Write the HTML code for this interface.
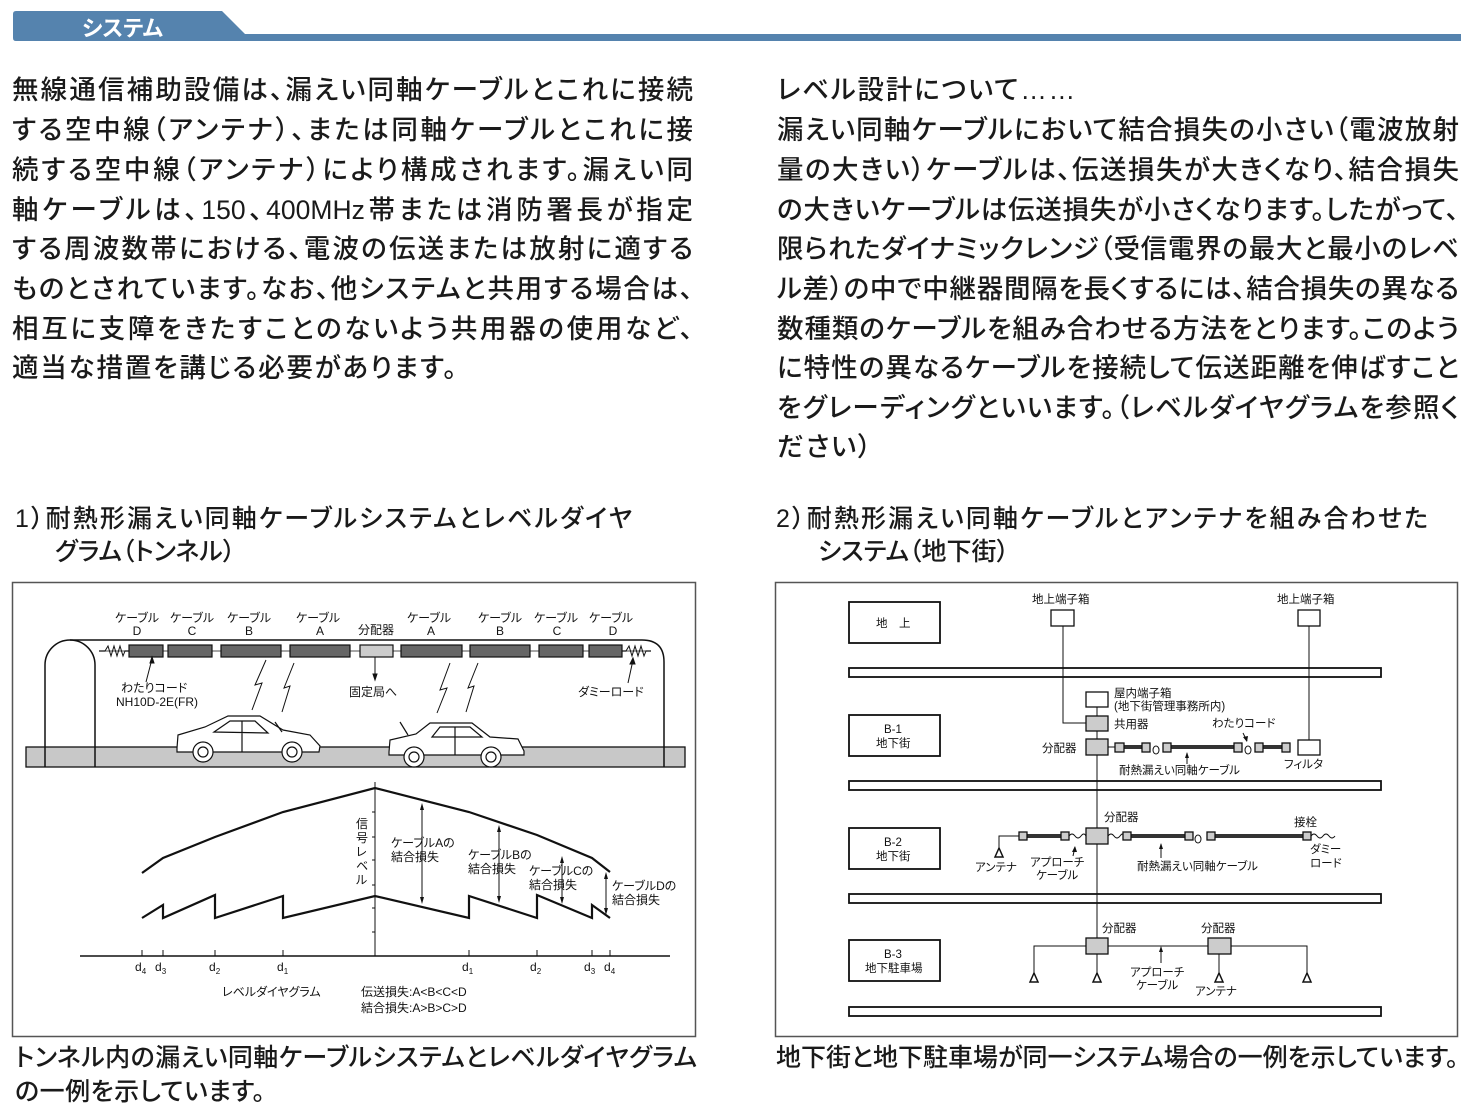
<!DOCTYPE html>
<html><head><meta charset="utf-8">
<style>
body{margin:0;width:1482px;height:1118px;background:#fff;position:relative;overflow:hidden;font-family:"Liberation Sans","Noto Sans CJK JP",sans-serif;color:#1a1a1a;font-feature-settings:"palt"}
.l{position:absolute;font-size:26.5px;font-weight:500;white-space:nowrap;line-height:30px;text-align:justify;text-align-last:justify}
.n{text-align-last:left;letter-spacing:1.8px}
.L{left:12px;width:681px}
.R{left:777px;width:682px}
.h{position:absolute;font-size:25px;font-weight:500;white-space:nowrap;line-height:30px;text-align:justify;text-align-last:justify}
svg{position:absolute;left:0;top:0}
svg text{font-family:"Liberation Sans","Noto Sans CJK JP",sans-serif;fill:#111}
</style></head><body>
<svg width="1482" height="1118" viewBox="0 0 1482 1118">
<path d="M13 14 Q13 11 16 11 L222 11 L245 34 L1461 34 L1461 41 L16 41 Q13 41 13 38 Z" fill="#5583ae"/>
<text x="82" y="36" font-size="22" font-weight="bold" style="fill:#fff">システム</text>

<rect x="12.5" y="582.5" width="683" height="454" fill="none" stroke="#555" stroke-width="1.5"/>
<rect x="775.5" y="582.5" width="682" height="454" fill="none" stroke="#555" stroke-width="1.5"/>

<rect x="26" y="747" width="659" height="20" fill="#c8c8c8" stroke="#111" stroke-width="1.3"/>
<path d="M45 767 L45 665 A25 25 0 0 1 95 665 L95 767" fill="none" stroke="#111" stroke-width="1.5"/>
<path d="M70 640 L642 640 Q664 640 664 662 L664 767" fill="none" stroke="#111" stroke-width="1.5"/>
<line x1="99" y1="651" x2="651" y2="651" stroke="#888" stroke-width="1.5"/>
<g stroke="#111" stroke-width="1.2">
<rect x="129" y="645" width="34" height="12" fill="#666"/>
<rect x="168" y="645" width="44" height="12" fill="#666"/>
<rect x="221" y="645" width="60" height="12" fill="#666"/>
<rect x="290" y="645" width="60" height="12" fill="#666"/>
<rect x="360" y="645" width="33" height="12" fill="#ccc"/>
<rect x="401" y="645" width="61" height="12" fill="#666"/>
<rect x="470" y="645" width="60" height="12" fill="#666"/>
<rect x="539" y="645" width="44" height="12" fill="#666"/>
<rect x="589" y="645" width="33" height="12" fill="#666"/>
</g>
<g fill="none" stroke="#111" stroke-width="1">
<polyline points="99,651 105,651 108,646 111,656 114,646 117,656 120,646 123,656 125,651 129,651"/>
<polyline points="622,651 626,651 629,646 632,656 635,646 638,656 641,646 644,656 646,651 651,651"/>
<line x1="146" y1="682" x2="152" y2="659"/><polygon points="152,657 150,663 154,663" fill="#111"/>
<line x1="375" y1="657" x2="375" y2="678"/><polygon points="375,680 373,674 377,674" fill="#111"/>
<line x1="628" y1="683" x2="633" y2="660"/><polygon points="633,658 630,664 635,664" fill="#111"/>
<polyline points="252,710 262,683 255,685 266,660"/>
<polyline points="294,663 284,688 290,686 282,712"/>
<polyline points="437,713 447,688 440,690 450,663"/>
<polyline points="478,663 468,688 474,686 466,712"/>
</g>
<g font-size="12" text-anchor="middle">
<text x="137" y="622">ケーブル</text><text x="137" y="635">D</text>
<text x="192" y="622">ケーブル</text><text x="192" y="635">C</text>
<text x="249" y="622">ケーブル</text><text x="249" y="635">B</text>
<text x="318" y="622">ケーブル</text><text x="320" y="635">A</text>
<text x="376" y="634">分配器</text>
<text x="429" y="622">ケーブル</text><text x="431" y="635">A</text>
<text x="500" y="622">ケーブル</text><text x="500" y="635">B</text>
<text x="556" y="622">ケーブル</text><text x="557" y="635">C</text>
<text x="611" y="622">ケーブル</text><text x="613" y="635">D</text>
</g>
<g font-size="12">
<text x="121" y="692">わたりコード</text>
<text x="116" y="706">NH10D-2E(FR)</text>
<text x="349" y="696">固定局へ</text>
<text x="578" y="696">ダミーロード</text>
</g>
<g stroke="#111" stroke-width="1.2" fill="#fff">
<path d="M177 748 L178 735 L205 727 L228 716 L260 716 L283 730 L310 735 L320 746 L319 752 L177 752 Z"/>
<path d="M214 732 L230 721 L255 721 L268 733 Z M242 721 L242 752" fill="none"/>
<line x1="275" y1="722" x2="282" y2="732"/>
<circle cx="203" cy="752" r="10"/><circle cx="203" cy="752" r="5"/>
<circle cx="292" cy="752" r="10"/><circle cx="292" cy="752" r="5"/>
<path d="M389 752 L390 740 L416 734 L430 723 L472 723 L490 737 L518 739 L524 751 L524 755 L389 755 Z"/>
<path d="M432 737 L440 727 L470 727 L482 737 Z M455 727 L455 755" fill="none"/>
<line x1="408" y1="735" x2="400" y2="722"/>
<circle cx="414" cy="757" r="10"/><circle cx="414" cy="757" r="5"/>
<circle cx="491" cy="757" r="10"/><circle cx="491" cy="757" r="5"/>
</g>

<g stroke="#111" fill="none">
<line x1="80" y1="956" x2="670" y2="956" stroke-width="1.5"/>
<line x1="375" y1="782" x2="375" y2="956" stroke-width="1"/>
<path d="M372 812h3M372 837h3M372 860h3M372 885h3M372 908h3M372 932h3" stroke-width="1"/>
<polyline stroke-width="2.2" points="142,873 163,858 215,837 283,812 375,788 469,812 537,835 592,858 610,872"/>
<polyline stroke-width="2.2" points="142,918 163,905 163,918 215,895 215,918 283,896 283,918 375,896 469,918 469,896 537,918 537,895 592,918 592,905 610,918"/>
<path d="M142 950v6M163 950v6M215 950v6M283 950v6M469 950v6M537 950v6M592 950v6M610 950v6" stroke-width="1"/>
<path d="M422 805V902M499 827V901M562 858V902M606 874V913" stroke-width="1"/>
</g>
<g fill="#111">
<polygon points="422,803 420,810 424,810"/><polygon points="422,904 420,897 424,897"/>
<polygon points="499,825 497,832 501,832"/><polygon points="499,903 497,896 501,896"/>
<polygon points="562,856 560,863 564,863"/><polygon points="562,904 560,897 564,897"/>
<polygon points="606,872 604,879 608,879"/><polygon points="606,915 604,908 608,908"/>
</g>
<g font-size="12">
<text x="356" y="828">信</text><text x="356" y="842">号</text><text x="356" y="856">レ</text><text x="356" y="870">ベ</text><text x="356" y="884">ル</text>
<text x="391" y="847">ケーブルAの</text><text x="391" y="861">結合損失</text>
<text x="468" y="859">ケーブルBの</text><text x="468" y="873">結合損失</text>
<text x="529" y="875">ケーブルCの</text><text x="529" y="889">結合損失</text>
<text x="612" y="890">ケーブルDの</text><text x="612" y="904">結合損失</text>
<text x="222" y="996">レベルダイヤグラム</text>
<text x="361" y="996">伝送損失:A&lt;B&lt;C&lt;D</text>
<text x="361" y="1012">結合損失:A&gt;B&gt;C&gt;D</text>
<text x="135" y="971">d<tspan font-size="8" dy="3">4</tspan></text>
<text x="155" y="971">d<tspan font-size="8" dy="3">3</tspan></text>
<text x="209" y="971">d<tspan font-size="8" dy="3">2</tspan></text>
<text x="277" y="971">d<tspan font-size="8" dy="3">1</tspan></text>
<text x="462" y="971">d<tspan font-size="8" dy="3">1</tspan></text>
<text x="530" y="971">d<tspan font-size="8" dy="3">2</tspan></text>
<text x="584" y="971">d<tspan font-size="8" dy="3">3</tspan></text>
<text x="604" y="971">d<tspan font-size="8" dy="3">4</tspan></text>
</g>

<g stroke="#111" stroke-width="1.8" fill="#fff">
<rect x="849" y="602" width="91" height="41"/>
<rect x="849" y="715" width="91" height="41"/>
<rect x="849" y="828" width="91" height="41"/>
<rect x="849" y="940" width="91" height="41"/>
<rect x="849" y="668" width="532" height="9"/>
<rect x="849" y="781" width="532" height="9"/>
<rect x="849" y="894" width="532" height="9"/>
<rect x="849" y="1007" width="532" height="9"/>
</g>
<g stroke="#111" stroke-width="1" fill="none">
<polyline points="1063,626 1063,723 1086,723"/>
<line x1="1309" y1="626" x2="1309" y2="740"/>
<line x1="1097" y1="707" x2="1097" y2="978"/>
<line x1="1108" y1="747" x2="1115" y2="747"/>
<polyline points="999,853 999,836 1019,836"/>
<path d="M1069 836q3-4 6 0t6 0 5 0M1108 836q3-4 6 0t6 0 3 0M1311 836q3-4 6 0t6 0 6 0 6 0"/>
<polyline points="1034,976 1034,946 1307,946 1307,976"/>
<line x1="1219" y1="954" x2="1219" y2="976"/>
<ellipse cx="1156" cy="750" rx="3" ry="4"/><ellipse cx="1248" cy="750" rx="3" ry="4"/><ellipse cx="1198" cy="839" rx="3" ry="4"/>
<line x1="1187" y1="753" x2="1187" y2="764"/><line x1="1243" y1="733" x2="1247" y2="741"/>
<line x1="1161" y1="844" x2="1161" y2="858"/><line x1="1075" y1="847" x2="1073" y2="856"/>
<line x1="1161" y1="947" x2="1161" y2="963"/>
</g>
<g stroke="#111" stroke-width="1.3">
<rect x="1051" y="610" width="23" height="16" fill="#fff"/>
<rect x="1298" y="610" width="22" height="16" fill="#fff"/>
<rect x="1086" y="692" width="22" height="15" fill="#fff"/>
<rect x="1086" y="716" width="22" height="15" fill="#ccc"/>
<rect x="1086" y="739" width="22" height="16" fill="#ccc"/>
<rect x="1298" y="740" width="22" height="15" fill="#fff"/>
<rect x="1086" y="828" width="22" height="16" fill="#ccc"/>
<rect x="1086" y="938" width="22" height="16" fill="#ccc"/>
<rect x="1208" y="938" width="23" height="16" fill="#ccc"/>
<path d="M1124 747H1142M1171 747H1234M1263 747H1282M1027 836H1061M1131 836H1185M1215 836H1303" stroke-width="4" stroke="#333"/>
<rect x="1115" y="743" width="9" height="9" fill="#ccc"/><rect x="1142" y="743" width="8" height="9" fill="#ccc"/>
<rect x="1163" y="743" width="8" height="9" fill="#ccc"/><rect x="1234" y="743" width="8" height="9" fill="#ccc"/>
<rect x="1255" y="743" width="8" height="9" fill="#ccc"/><rect x="1282" y="743" width="8" height="9" fill="#ccc"/>
<rect x="1019" y="832" width="8" height="8" fill="#ccc"/><rect x="1061" y="832" width="8" height="8" fill="#ccc"/>
<rect x="1123" y="832" width="8" height="8" fill="#ccc"/><rect x="1185" y="832" width="8" height="8" fill="#ccc"/>
<rect x="1207" y="832" width="8" height="8" fill="#ccc"/><rect x="1303" y="832" width="8" height="8" fill="#ccc"/>
</g>
<g fill="#fff" stroke="#111" stroke-width="1.5">
<polygon points="999,848 995,857 1003,857"/>
<polygon points="1034,973 1030,982 1038,982"/><polygon points="1097,973 1093,982 1101,982"/>
<polygon points="1219,973 1215,982 1223,982"/><polygon points="1307,973 1303,982 1311,982"/>
</g>
<g fill="#111"><polygon points="1187,752 1185,758 1189,758"/><polygon points="1247,742 1243,737 1248,736"/><polygon points="1161,843 1159,849 1163,849"/><polygon points="1161,946 1159,952 1163,952"/><polygon points="1075,846 1072,852 1077,852"/></g>
<g font-size="11.5">
<text x="876" y="627">地　上</text>
<text x="884" y="733">B-1</text><text x="876" y="747">地下街</text>
<text x="884" y="846">B-2</text><text x="876" y="860">地下街</text>
<text x="884" y="958">B-3</text><text x="865" y="972">地下駐車場</text>
<text x="1032" y="603">地上端子箱</text><text x="1277" y="603">地上端子箱</text>
<text x="1114" y="697">屋内端子箱</text><text x="1114" y="710">(地下街管理事務所内)</text>
<text x="1114" y="728">共用器</text><text x="1212" y="727">わたりコード</text>
<text x="1042" y="752">分配器</text>
<text x="1284" y="768">フィルタ</text><text x="1119" y="774">耐熱漏えい同軸ケーブル</text>
<text x="1104" y="821">分配器</text><text x="1294" y="826">接栓</text>
<text x="1310" y="853">ダミー</text><text x="1310" y="867">ロード</text>
<text x="975" y="871">アンテナ</text><text x="1030" y="866">アプローチ</text><text x="1036" y="879">ケーブル</text>
<text x="1137" y="870">耐熱漏えい同軸ケーブル</text>
<text x="1102" y="932">分配器</text><text x="1201" y="932">分配器</text>
<text x="1130" y="976">アプローチ</text><text x="1136" y="989">ケーブル</text><text x="1195" y="995">アンテナ</text>
</g>
</svg>

<div class="l L" style="top:75px">無線通信補助設備は、漏えい同軸ケーブルとこれに接続</div>
<div class="l L" style="top:115px">する空中線（アンテナ）、または同軸ケーブルとこれに接</div>
<div class="l L" style="top:155px">続する空中線（アンテナ）により構成されます。漏えい同</div>
<div class="l L" style="top:195px">軸ケーブルは、150、400MHz帯または消防署長が指定</div>
<div class="l L" style="top:234px">する周波数帯における、電波の伝送または放射に適する</div>
<div class="l L" style="top:274px">ものとされています。なお、他システムと共用する場合は、</div>
<div class="l L" style="top:314px">相互に支障をきたすことのないよう共用器の使用など、</div>
<div class="l L n" style="top:353px">適当な措置を講じる必要があります。</div>

<div class="l R n" style="top:75px">レベル設計について……</div>
<div class="l R" style="top:115px">漏えい同軸ケーブルにおいて結合損失の小さい（電波放射</div>
<div class="l R" style="top:155px">量の大きい）ケーブルは、伝送損失が大きくなり、結合損失</div>
<div class="l R" style="top:195px">の大きいケーブルは伝送損失が小さくなります。したがって、</div>
<div class="l R" style="top:234px">限られたダイナミックレンジ（受信電界の最大と最小のレベ</div>
<div class="l R" style="top:274px">ル差）の中で中継器間隔を長くするには、結合損失の異なる</div>
<div class="l R" style="top:314px">数種類のケーブルを組み合わせる方法をとります。このよう</div>
<div class="l R" style="top:353px">に特性の異なるケーブルを接続して伝送距離を伸ばすこと</div>
<div class="l R" style="top:393px">をグレーディングといいます。（レベルダイヤグラムを参照く</div>
<div class="l R n" style="top:432px">ださい）</div>

<div class="h" style="left:15px;width:617px;top:504px">1）耐熱形漏えい同軸ケーブルシステムとレベルダイヤ</div>
<div class="h" style="left:55px;top:537px;text-align-last:left">グラム（トンネル）</div>
<div class="h" style="left:776px;width:652px;top:504px">2）耐熱形漏えい同軸ケーブルとアンテナを組み合わせた</div>
<div class="h" style="left:818px;top:537px;text-align-last:left">システム（地下街）</div>

<div class="l" style="left:15px;width:682px;top:1043px;font-size:25px">トンネル内の漏えい同軸ケーブルシステムとレベルダイヤグラム</div>
<div class="l n" style="left:15px;top:1077px;font-size:25px;letter-spacing:0.5px">の一例を示しています。</div>
<div class="l" style="left:776px;width:682px;top:1043px;font-size:25px">地下街と地下駐車場が同一システム場合の一例を示しています。</div>
</body></html>
